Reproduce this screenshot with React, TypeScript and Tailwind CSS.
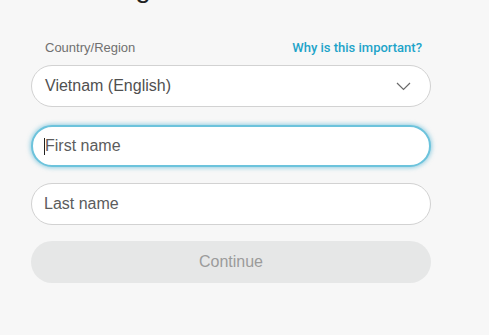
import React from "react";

export default function App() {
  return (
    <div
      className="w-[489px] h-[335px] overflow-hidden bg-[#f7f7f7]"
      style={{ fontFamily: '"Liberation Sans", Arial, sans-serif' }}
    >
      <div className="ml-[31px] w-[400px] flex flex-col">
        <h1 className="-mt-[27px] h-[30px] text-[28px] leading-[30px] text-[#222] pl-[14px]">
          Creating account
        </h1>
        <div className="mt-[37px] flex items-center justify-between pl-[14px] pr-[9px] h-[16px]">
          <span className="text-[13px] text-[#707070]">Country/Region</span>
          <span
            className="text-[13px] font-medium text-[#1ea4c9]"
            style={{ fontFamily: 'Roboto, "Liberation Sans", sans-serif' }}
          >
            Why is this important?
          </span>
        </div>
        <div className="mt-[9px] h-[42px] rounded-full border border-[#d2d2d2] bg-white flex items-center justify-between pl-[13px] pr-[19px]">
          <span className="text-[16px] text-[#505050]">Vietnam (English)</span>
          <svg width="15" height="9" viewBox="0 0 15 9" fill="none">
            <path d="M1 1l6.5 6.5L14 1" stroke="#6a6a6a" strokeWidth="1.2" />
          </svg>
        </div>
        <div className="mt-[18px] h-[42px] rounded-full border-2 border-[#6cc3dc] bg-white shadow-[0_0_4px_1px_rgba(70,175,210,0.55)] flex items-center pl-[11px]">
          <span className="w-[1px] h-[17px] bg-[#222]" />
          <span className="text-[16px] text-[#5c5c5c]">First name</span>
        </div>
        <div className="mt-[16px] h-[42px] rounded-full border border-[#d2d2d2] bg-white flex items-center pl-[12px]">
          <span className="text-[16px] text-[#5c5c5c]">Last name</span>
        </div>
        <div className="mt-[16px] h-[42px] rounded-full bg-[#e6e7e7] flex items-center justify-center">
          <span className="text-[16px] text-[#9b9b9b]">Continue</span>
        </div>
      </div>
    </div>
  );
}
